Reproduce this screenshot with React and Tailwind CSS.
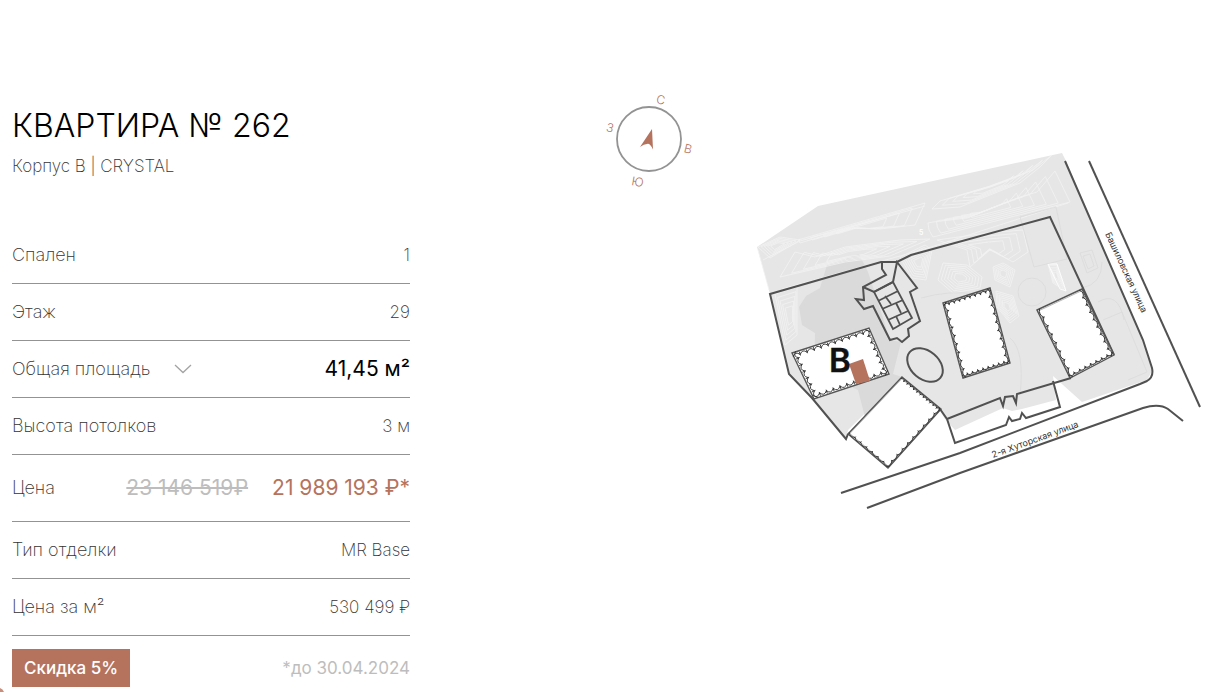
import { useState } from "react";

const hills = [
  { n: 4, points: [[798, 240], [925, 203], [915, 225], [880, 229], [850, 228], [800, 243]] },
  { n: 5, points: [[932, 209], [940, 201], [987, 187], [1033, 170], [1052, 155], [1040, 167], [1020, 183], [985, 197], [960, 207]] },
  { n: 6, points: [[928, 223], [933, 222], [967, 218], [1000, 205], [1020, 197], [1037, 192], [1055, 171], [1070, 202], [933, 237], [929, 230]] },
  { n: 6, points: [[943, 263], [967, 265], [982, 277], [980, 288], [953, 293], [938, 280]] },
  { n: 5, points: [[993, 267], [1003, 263], [1015, 270], [1010, 287], [995, 280]] },
  { n: 4, points: [[987, 233], [1023, 230], [1028, 252], [1013, 262], [990, 250], [970, 267], [967, 250], [937, 240]] },
  { n: 6, points: [[900, 257], [925, 245], [932, 250], [926, 280], [912, 278]] },
  { n: 5, points: [[780, 277], [795, 252], [815, 257], [845, 247], [900, 240], [930, 239], [890, 256], [845, 262]] },
  { n: 5, points: [[758, 247], [780, 237], [800, 240], [770, 258]] },
  { n: 5, points: [[775, 294], [797, 287], [797, 315], [797, 335], [785, 345]] },
  { n: 6, points: [[1048, 264], [1057, 264], [1066, 291], [1053, 283]] },
  { n: 6, points: [[996, 291], [1013, 296], [1019, 316], [1010, 323], [997, 307]] },
];

// teeth: number of balconies on each side, starting from the first corner
const buildings = [
  { id: "b", corners: [[792, 353], [869, 328], [889, 374], [814, 399]], teeth: [11, 7, 11, 7], depth: 5 },
  { id: "tower", corners: [[902, 377], [941, 409], [888, 468], [848, 434]], teeth: [12, 10, 7, 0], depth: 3 },
  { id: "middle", corners: [[943, 303], [990, 288], [1010, 363], [963, 378]], teeth: [9, 9, 9, 9], depth: 4 },
  { id: "right", corners: [[1037, 310], [1082, 289], [1114, 355], [1070, 378]], teeth: [0, 9, 8, 8], depth: 4 },
];

const toPoints = (points) => points.map((p) => p.join(",")).join(" ");

const shrink = (points, k) => {
  const cx = points.reduce((s, p) => s + p[0], 0) / points.length;
  const cy = points.reduce((s, p) => s + p[1], 0) / points.length;
  return points.map(([x, y]) => [cx + (x - cx) * k, cy + (y - cy) * k]);
};

const balconyPath = ({ corners, teeth, depth }) => {
  let d = "";
  corners.forEach(([x1, y1], i) => {
    const [x2, y2] = corners[(i + 1) % corners.length];
    const len = Math.hypot(x2 - x1, y2 - y1);
    const nx = -(y2 - y1) / len;
    const ny = (x2 - x1) / len;
    const at = (t, off) => `${(x1 + (x2 - x1) * t + nx * off).toFixed(1)} ${(y1 + (y2 - y1) * t + ny * off).toFixed(1)}`;
    for (let k = 0; k < teeth[i]; k += 1) {
      const a = k / teeth[i];
      const b = (k + 1) / teeth[i];
      if (k > 0) d += `M${at(a, 1)}L${at(a, depth)}`;
      d += `M${at(a, depth - 1)}Q${at((a + b) / 2, -1)} ${at(b, depth - 1)}`;
    }
  });
  return d;
};

const Compass = () => (
  <svg viewBox="0 0 92 100" className="mt-[90px] h-[100px] w-[92px] shrink-0 font-['Inter'] text-xs font-light" fill="#b5735d" textAnchor="middle">
    <circle cx="45" cy="49" r="32" fill="none" stroke="#939393" strokeWidth="1.8" />
    <path d="M48 39 L49 59.500 Q46 53 43 54 Q40 54 36 57 Z" />
    <text transform="translate(56 14) rotate(10)">С</text>
    <text transform="translate(83 63) rotate(14)">В</text>
    <text transform="translate(33 96) rotate(10)">Ю</text>
    <text transform="translate(5 42) rotate(14)">З</text>
  </svg>
);

const SitePlan = () => (
  <svg viewBox="752 150 450 362" className="mt-[150px] h-[362px] w-[450px] shrink-0" fill="none">
    <path
      d="M757 247 L818 206 L1062 153 L1066 161 L1143 340 L1152 371 L1147 380 L1082 402 L1053 376 L1056 400 L1022 409 L1012 411 L1003 408 L955 430 L945 419 L938 408 L902 377 L848 430 L846 439 L812 398 L789 374 L770 294 Z"
      fill="#e6e6e6"
    />
    <path
      d="M827 265 L859 254 L868 272 L874 290 L890 340 L901 342 L893 374 L902 377 L865 417 L858 390 L814 370 L815 333 L802 325 L799 307 L806 296 L820 288 Z"
      fill="#dadada"
    />

    <g stroke="#f2f2f2" strokeWidth="0.8" strokeLinejoin="round">
      {hills.map(({ n, points }) =>
        Array.from({ length: n }, (_, i) => <polygon key={`${points[0]}-${i}`} points={toPoints(shrink(points, 1 - i / (n + 1)))} />)
      )}
      <path d="M758 250 L769 290 M763 260 L800 241 L925 206 M782 289 L925 249 L1068 203" />
      <path d="M1048 264 L1057 264 L1066 291 L1060 289 Z" stroke="#ffffff" />
    </g>
    <g stroke="#dadada" strokeWidth="0.8">
      <path d="M1020 217 L1056 207 L1067 259 L1034 267 Z M1080 253 L1092 250 L1098 268 L1087 273 Z M1083 256 L1090 254 L1094 266 L1088 269 Z" />
      <circle cx="1032" cy="292" r="14" />
      <path d="M1098 302 Q1118 290 1124 320 M1103 320 L1122 312 L1147 372 L1128 380 M921 298 Q950 290 975 294 M1010 338 Q1025 350 1020 395 M1082 288 Q1102 284 1102 262" />
    </g>
    <text x="919" y="235" fill="#ffffff" className="font-['Inter'] text-[7px] font-semibold">5</text>

    <g stroke="#515151" strokeWidth="2" strokeLinejoin="miter">
      <path d="M1071 378 L1017 394 L1016 403 L1013 396 L1005 397 L1003 406 L1000 398 L947 419 L940 409 M947 419 L955 443 L1006 425 L1009 417 L1012 421 L1020 419 L1022 413 L1026 418 L1060 407 L1053 381" />
      <path d="M848 434 L846 439 L812 398 L789 374 L770 294 L881 262 L897 262 L911 255 L1050 217 L1114 355" />
      <path d="M882 262 L882 269 L886 275 L863 287 L864 300 L856 299 L864 309 L873 306 L890 340 L897 338 L902 342 L909 336 L908 329 L920 321 L910 292 L917 288 L897 262 L893 282 L874 292 L863 287" />
      <path d="M874 292 L893 282 L912 318 L893 329 Z M878 301 L898 291 M882 309 L903 300 M888 320 L908 311 M885 296 L891 304 M896 303 L901 313 M896 316 L900 325" strokeWidth="1.8" />
      <ellipse cx="925" cy="365" rx="20" ry="14" transform="rotate(40 925 365)" />
    </g>

    {buildings.map((b) => (
      <g key={b.id}>
        <polygon points={toPoints(b.corners)} fill="#ffffff" stroke="#555555" strokeWidth="1.4" />
        {b.id !== "b" ? <polygon points={toPoints(shrink(b.corners, 0.96))} stroke="#8a8a8a" strokeWidth="0.6" /> : null}
        <path d={balconyPath(b)} stroke="#2b2b2b" strokeWidth="0.9" />
      </g>
    ))}

    <path d="M849 364 L863 359 L870 381 L856 384 Z" fill="#b5735d" />
    <text x="829" y="372" fill="#111111" stroke="#111111" strokeWidth="0.4" className="font-['Inter'] text-[33px] font-semibold">B</text>

    <g stroke="#515151" strokeWidth="2">
      <path d="M1065 161 L1143 340 L1152 368 Q1154 377 1147 381 L1140 384 L960 453 L841 493" />
      <path d="M1089 161 L1200 407" />
      <path d="M867 508 L960 473 L1143 408 Q1159 403 1168 409 L1183 421" />
    </g>
    <g fill="#333333" className="font-['Inter'] text-[9px] font-normal">
      <text transform="translate(1105 234) rotate(65)">Башиловская улица</text>
      <text transform="translate(993 458) rotate(-20)">2-я Хуторская улица</text>
    </g>
  </svg>
);

const Row = ({ label, children, tall }) => (
  <div className={`flex items-center justify-between border-b border-[#939393] ${tall ? "h-[67px]" : "h-[57px]"}`}>
    <dt className="flex items-center gap-6 text-lg leading-6">{label}</dt>
    <dd className="flex items-center gap-6">{children}</dd>
  </div>
);

const AreaToggle = () => {
  const [open, setOpen] = useState(false);

  return (
    <button type="button" aria-label="Общая площадь" aria-expanded={open} onClick={() => setOpen(!open)} className="text-[#a3a3a3]">
      <svg viewBox="0 0 18 10" className={`h-[10px] w-[18px] ${open ? "rotate-180" : ""}`} fill="none" stroke="currentColor" strokeWidth="1.3">
        <path d="M1 1 L9 8.500 L17 1" />
      </svg>
    </button>
  );
};

export default function App() {
  return (
    <main className="flex bg-white font-['Inter',sans-serif] text-[17px] leading-6 font-extralight text-[#333333]">
      <section className="ml-3 w-[398px] shrink-0 pt-[106px]">
        <h1 className="text-[32px] leading-10 font-light text-black">КВАРТИРА № 262</h1>
        <p className="mt-2">Корпус В | CRYSTAL</p>

        <dl className="mt-[49px]">
          <Row label="Спален">1</Row>
          <Row label="Этаж">29</Row>
          <Row label={<>Общая площадь<AreaToggle /></>}>
            <span className="text-[21px] font-normal text-black">41,45 м²</span>
          </Row>
          <Row label="Высота потолков">3 м</Row>
          <Row label="Цена" tall>
            <s className="text-[21px] font-normal text-[#bdbdbd]">23 146 519₽</s>
            <span className="text-[21px] font-normal text-[#b5735d]">21 989 193 ₽*</span>
          </Row>
          <Row label="Тип отделки">MR Base</Row>
          <Row label="Цена за м²">530 499 ₽</Row>
        </dl>

        <div className="mt-[13px] flex items-center justify-between">
          <span className="bg-[#b5735d] px-3 py-[7px] font-medium text-white">Скидка 5%</span>
          <span className="font-normal text-[#bdbdbd]">*до 30.04.2024</span>
        </div>
      </section>

      <section className="ml-auto flex gap-14 pr-7">
        <Compass />
        <SitePlan />
      </section>

      <svg viewBox="0 0 4 5" className="fixed bottom-0 left-0 h-[5px] w-1" fill="#c98f7d">
        <path d="M0 1 Q3 2 4 5 L0 5 Z" />
      </svg>
    </main>
  );
}
